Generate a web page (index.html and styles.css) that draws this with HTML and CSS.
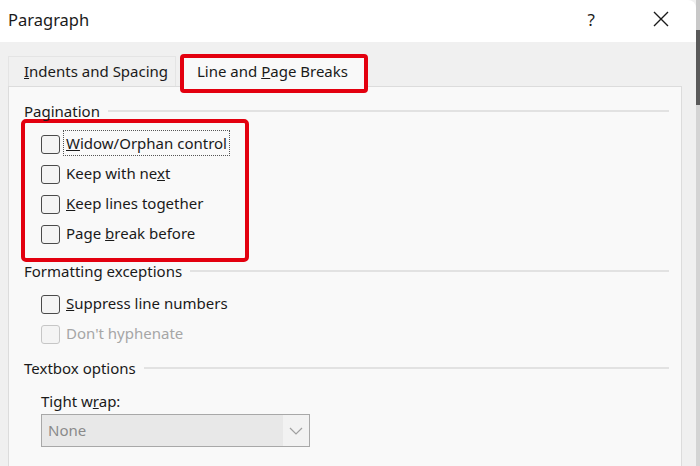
FILE: index.html
```html
<!DOCTYPE html>
<html lang="en">
  <head>
    <meta charset="UTF-8" />
    <meta name="viewport" content="width=device-width, initial-scale=1.0" />
    <title>Paragraph</title>
    <link rel="stylesheet" href="styles.css">
  </head>
  <body>
    <div class="screen">
      <div class="dialog">
        <div class="titlebar">
          <span class="title">Paragraph</span>
          <span class="help">?</span>
          <span class="close">
            <svg width="16" height="16" viewBox="0 0 16 16">
              <path d="M1 1 L15 15 M15 1 L1 15" stroke="#1a1a1a" stroke-width="1.4" fill="none" />
            </svg>
          </span>
        </div>

        <div class="tabs">
          <div class="tab"><span><u>I</u>ndents and Spacing</span></div>
          <div class="tab tab-active"><span>Line and <u>P</u>age Breaks</span></div>
        </div>

        <div class="panel">
          <div class="group-title">Pagination</div>
          <div class="highlight">
            <label class="check"><span class="box"></span><span class="focus"><u>W</u>idow/Orphan control</span></label>
            <label class="check"><span class="box"></span><span>Keep with ne<u>x</u>t</span></label>
            <label class="check"><span class="box"></span><span><u>K</u>eep lines together</span></label>
            <label class="check"><span class="box"></span><span>Page <u>b</u>reak before</span></label>
          </div>

          <div class="group-title">Formatting exceptions</div>
          <div class="group">
            <label class="check"><span class="box"></span><span><u>S</u>uppress line numbers</span></label>
            <label class="check disabled"><span class="box"></span><span>Don't hyphenate</span></label>
          </div>

          <div class="group-title">Textbox options</div>
          <div class="group">
            <div class="field-label">Tight w<u>r</u>ap:</div>
            <div class="select">
              <span class="select-value">None</span>
              <span class="select-arrow">
                <svg width="14" height="8" viewBox="0 0 14 8">
                  <path d="M1 1 L7 7 L13 1" stroke="#a0a0a0" stroke-width="1.2" fill="none" />
                </svg>
              </span>
            </div>
          </div>
        </div>
      </div>
      <div class="edge"></div>
    </div>
  </body>
</html>
```

FILE: styles.css
```css
body {
    margin: 0;
    font-family: "Noto Sans", "Open Sans", sans-serif;
    color: #1a1a1a;
    background-color: #f0f0f0;
}

.screen {
    display: flex;
    width: 700px;
    height: 466px;
    overflow: hidden;
}

.dialog {
    flex: 1;
    display: flex;
    flex-direction: column;
    background-color: #f0f0f0;
    border-top-right-radius: 8px;
}

.edge {
    width: 4px;
    background: linear-gradient(#c8c8c8 0, #c8c8c8 30px, #5a5a5a 30px, #5a5a5a 105px, #d4d4d4 105px);
}

/* Title bar */
.titlebar {
    height: 42px;
    display: flex;
    align-items: center;
    background-color: #fff;
    border-top-right-radius: 8px;
}

.title {
    flex: 1;
    padding-left: 8px;
    font-size: 16.5px;
    margin-top: -3px;
}

.help {
    font-size: 17px;
    margin-right: 58px;
    margin-top: -3px;
}

.close {
    display: flex;
    margin-right: 27px;
    margin-top: -4px;
}

/* Tabs */
.tabs {
    display: flex;
    align-items: flex-end;
    padding: 12px 0 0 8px;
}

.tab {
    box-sizing: border-box;
    width: 168px;
    height: 30px;
    display: flex;
    align-items: center;
    padding: 0 0 1px 15px;
    font-size: 15px;
    border: 1px solid #e4e4e4;
    border-bottom: none;
}

.tab-active {
    width: 188px;
    height: 39px;
    margin-left: 4px;
    padding: 0 0 6px 13px;
    background-color: #f9f9f9;
    border: 4px solid #e3000f;
    border-radius: 4px;
    margin-bottom: -7px;
    position: relative;
    z-index: 1;
}

/* Panel */
.panel {
    flex: 1;
    margin: 0 14px 0 8px;
    background-color: #f9f9f9;
    border: 1px solid #dcdcdc;
    border-bottom: none;
    padding: 15px 12px 0 15px;
}

.group-title {
    display: flex;
    align-items: center;
    font-size: 15px;
    line-height: 18px;
}

.group-title::after {
    content: "";
    flex: 1;
    height: 2px;
    background-color: #e2e2e2;
    margin-left: 8px;
    margin-top: -1px;
}

.highlight {
    width: 204px;
    margin: -1px 0 0 -3px;
    padding: 6px 0 9px 16px;
    border: 4px solid #e3000f;
    border-radius: 5px;
}

.group {
    padding: 9px 0 10px 17px;
}

.check {
    display: flex;
    align-items: center;
    height: 30px;
    font-size: 15px;
}

.check span:last-child {
    margin-top: -2px;
}

.box {
    width: 17px;
    height: 17px;
    border: 1px solid #4a4a4a;
    border-radius: 3px;
    background-color: #f4f4f4;
    margin-right: 6px;
}

.focus {
    padding: 2px 2px;
    margin-left: -2px;
    outline: 1px dotted #555;
}

.disabled {
    color: #a6a6a6;
}

.disabled .box {
    border-color: #c6c6c6;
}

.field-label {
    font-size: 15px;
    line-height: 20px;
    margin: 5px 0 3px;
}

.select {
    width: 267px;
    height: 31px;
    display: flex;
    border: 1px solid #a8a8a8;
    background-color: #e8e8e8;
}

.select-value {
    flex: 1;
    display: flex;
    align-items: center;
    padding: 0 0 1px 6px;
    font-size: 15px;
    color: #8a8a8a;
}

.select-arrow {
    width: 26px;
    display: flex;
    align-items: center;
    justify-content: center;
    background-color: #f2f2f2;
}
```
